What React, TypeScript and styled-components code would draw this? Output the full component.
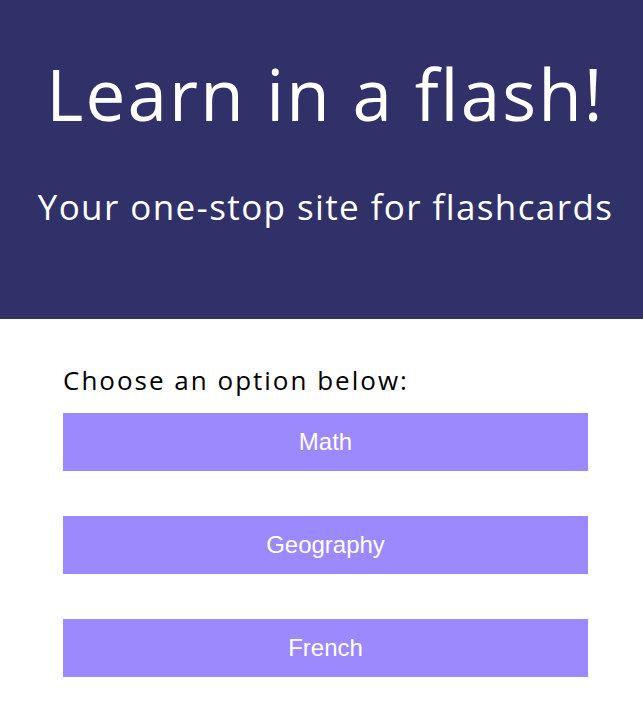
import React from "react";
import styled, { createGlobalStyle } from "styled-components";

const Global = createGlobalStyle`
  html, body { margin: 0; padding: 0; background: #ffffff; }
  body { font-family: "Open Sans", sans-serif; }
`;

const Header = styled.header`
  background: #303169;
  height: 319px;
  box-sizing: border-box;
  padding-top: 58px;
  display: flex;
  flex-direction: column;
  align-items: center;
  color: #ffffff;
  font-family: "Open Sans", sans-serif;
`;

const Title = styled.h1`
  margin: 0;
  padding-left: 8px;
  font-size: 71px;
  line-height: 1;
  font-weight: 500;
  letter-spacing: 2.1px;
  white-space: nowrap;
`;

const Subtitle = styled.h2`
  margin: 60px 0 0;
  padding-left: 8px;
  font-size: 35px;
  line-height: 1;
  font-weight: 400;
  letter-spacing: 1.4px;
  white-space: nowrap;
`;

const Main = styled.main`
  width: 525px;
  margin-left: 63px;
  padding-top: 48px;
  display: flex;
  flex-direction: column;
`;

const Prompt = styled.p`
  margin: 0 0 20px;
  font-family: "Open Sans", sans-serif;
  font-size: 26px;
  line-height: 1;
  letter-spacing: 2px;
  color: #000000;
`;

const Options = styled.div`
  display: flex;
  flex-direction: column;
  gap: 45px;
`;

const OptionButton = styled.button`
  height: 58px;
  border: none;
  background: #9c89fe;
  color: #ffffff;
  font-family: "Liberation Sans", Arial, sans-serif;
  font-size: 24px;
  cursor: pointer;
  padding: 0;
`;

const options = ["Math", "Geography", "French"];

export default function App() {
  return (
    <>
      <Global />
      <Header>
        <Title>Learn in a flash!</Title>
        <Subtitle>Your one-stop site for flashcards</Subtitle>
      </Header>
      <Main>
        <Prompt>Choose an option below:</Prompt>
        <Options>
          {options.map((o) => (
            <OptionButton key={o}>{o}</OptionButton>
          ))}
        </Options>
      </Main>
    </>
  );
}
